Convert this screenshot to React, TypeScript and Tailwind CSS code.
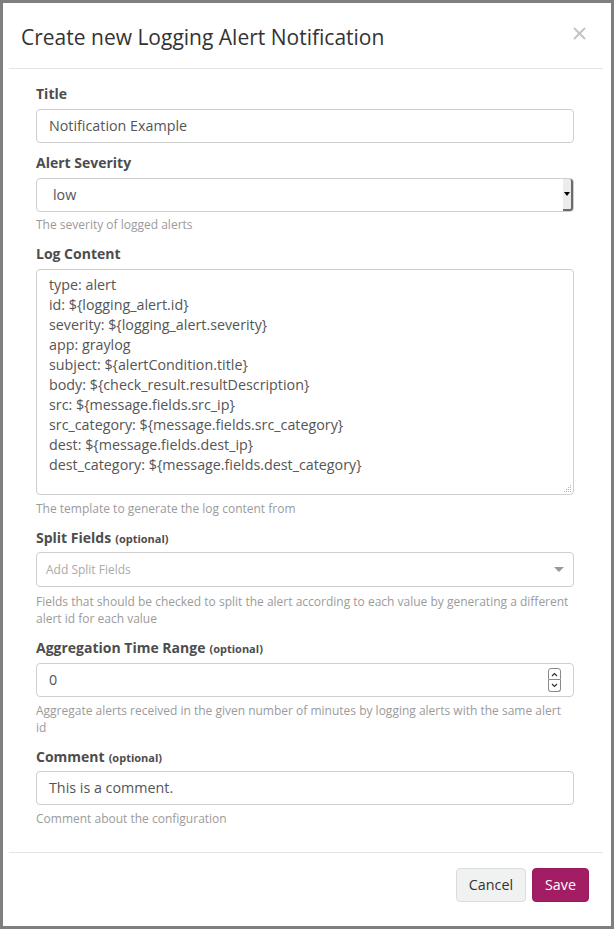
import React, { type FC, type ReactNode } from "react";

const logContent = [
  "type: alert",
  "id: ${logging_alert.id}",
  "severity: ${logging_alert.severity}",
  "app: graylog",
  "subject: ${alertCondition.title}",
  "body: ${check_result.resultDescription}",
  "src: ${message.fields.src_ip}",
  "src_category: ${message.fields.src_category}",
  "dest: ${message.fields.dest_ip}",
  "dest_category: ${message.fields.dest_category}",
];

interface LabelProps {
  text: string;
  optional?: boolean;
  className?: string;
}

const Label: FC<LabelProps> = ({ text, optional, className }) => (
  <div className={`h-[22px] text-[14px] font-bold leading-[22px] text-[#4d4d4d] ${className ?? "mb-[4px]"}`}>
    {text}
    {optional && <span className="ml-[4px] text-[11px]">(optional)</span>}
  </div>
);

const Help: FC<{ children: ReactNode; className?: string }> = ({ children, className }) => (
  <div className={`text-[12px] leading-[17px] text-[#9b9b9b] ${className ?? "mt-[5px]"}`}>{children}</div>
);

const TextBox: FC<{ value: string }> = ({ value }) => (
  <div className="flex h-[34px] items-center rounded-[4px] border border-[#cfcfcf] px-[12px] text-[14.3px] text-[#555]">
    {value}
  </div>
);

export default function App() {
  return (
    <div
      className="h-[929px] w-[614px] border-[3px] border-[#7f7f7f] bg-white"
      style={{ fontFamily: '"Open Sans", "Liberation Sans", sans-serif' }}
    >
      {/* header */}
      <div className="mx-[6px] mr-[8px] flex h-[66px] items-start justify-between border-b border-[#e5e5e5] pl-[12px] pr-[17px]">
        <div className="mt-[19px] text-[21px] leading-[30px] text-[#333]">
          Create new Logging Alert Notification
        </div>
        <svg className="mt-[24px]" width="13" height="13" viewBox="0 0 13 13">
          <path d="M1.5 1.5 L11.5 11.5 M11.5 1.5 L1.5 11.5" stroke="#c4c4c4" strokeWidth="2" strokeLinecap="round" />
        </svg>
      </div>

      {/* body */}
      <div className="px-[33px] pr-[37px] pt-[14px]">
        <Label text="Title" />
        <TextBox value="Notification Example" />

        <div className="mt-[9px]">
          <Label text="Alert Severity" />
          <div className="flex h-[34px] items-stretch rounded-[4px] border border-[#cfcfcf] text-[14.3px] text-[#555]">
            <div className="flex flex-1 items-center pl-[16px]">low</div>
            <div className="flex w-[10px] items-center justify-center rounded-r-[3px] border-r-2 border-b-2 border-r-[#6b6b6b] border-b-[#6b6b6b] bg-[#ececec]">
              <div className="h-0 w-0 border-x-[3px] border-t-[4px] border-x-transparent border-t-black" />
            </div>
          </div>
          <Help className="mt-[4px]">The severity of logged alerts</Help>
        </div>

        <div className="mt-[10px]">
          <Label text="Log Content" />
          <div className="relative h-[226px] rounded-[4px] border border-[#cfcfcf] px-[12px] pt-[5px] text-[14.3px] leading-[20px] text-[#555]">
            {logContent.map((line) => (
              <div key={line}>{line}</div>
            ))}
            <svg className="absolute bottom-[1px] right-[1px]" width="10" height="10" viewBox="0 0 10 10">
              <g fill="#b5b5b5">
                <rect x="8" y="2" width="1" height="1" />
                <rect x="6" y="4" width="1" height="1" />
                <rect x="8" y="4" width="1" height="1" />
                <rect x="4" y="6" width="1" height="1" />
                <rect x="6" y="6" width="1" height="1" />
                <rect x="8" y="6" width="1" height="1" />
                <rect x="2" y="8" width="1" height="1" />
                <rect x="4" y="8" width="1" height="1" />
                <rect x="6" y="8" width="1" height="1" />
                <rect x="8" y="8" width="1" height="1" />
              </g>
            </svg>
          </div>
          <Help>The template to generate the log content from</Help>
        </div>

        <div className="mt-[10px]">
          <Label text="Split Fields" optional className="mb-[3px]" />
          <div className="flex h-[35px] items-center justify-between rounded-[4px] border border-[#cfcfcf] pl-[9px] pr-[9px] text-[12px] text-[#aaa]">
            <span>Add Split Fields</span>
            <div className="h-0 w-0 border-x-[5px] border-t-[5px] border-x-transparent border-t-[#999]" />
          </div>
          <Help className="mt-[6px]">
            Fields that should be checked to split the alert according to each value by generating a different alert id for each value
          </Help>
        </div>

        <div className="mt-[10px]">
          <Label text="Aggregation Time Range" optional />
          <div className="flex h-[34px] items-center justify-between rounded-[4px] border border-[#cfcfcf] pl-[12px] pr-[12px] text-[14.3px] text-[#555]">
            <span>0</span>
            <div className="flex flex-col">
              <div className="flex h-[12px] w-[13px] items-center justify-center rounded-t-[3px] border border-[#8a8a8a]">
                <svg width="7" height="5" viewBox="0 0 7 5">
                  <path d="M1 4 L3.5 1.5 L6 4" fill="none" stroke="#333" strokeWidth="1.2" />
                </svg>
              </div>
              <div className="flex h-[12px] w-[13px] items-center justify-center rounded-b-[3px] border border-t-0 border-[#8a8a8a]">
                <svg width="7" height="5" viewBox="0 0 7 5">
                  <path d="M1 1 L3.5 3.5 L6 1" fill="none" stroke="#333" strokeWidth="1.2" />
                </svg>
              </div>
            </div>
          </div>
          <Help>
            Aggregate alerts received in the given number of minutes by logging alerts with the same alert id
          </Help>
        </div>

        <div className="mt-[10px]">
          <Label text="Comment" optional className="mb-[3px]" />
          <TextBox value="This is a comment." />
          <Help>Comment about the configuration</Help>
        </div>
      </div>

      {/* footer */}
      <div className="mx-[6px] mr-[8px] mt-[25px] flex justify-end gap-[6px] border-t border-[#e5e5e5] pr-[14px] pt-[15px]">
        <button className="h-[34px] rounded-[4px] border border-[#dcdcdc] bg-[#f0f1f1] px-[12px] text-[14.3px] text-[#333]">
          Cancel
        </button>
        <button className="h-[34px] rounded-[4px] border border-[#9b1a5d] bg-[#a31d64] px-[12px] text-[14.3px] text-white">
          Save
        </button>
      </div>
    </div>
  );
}
